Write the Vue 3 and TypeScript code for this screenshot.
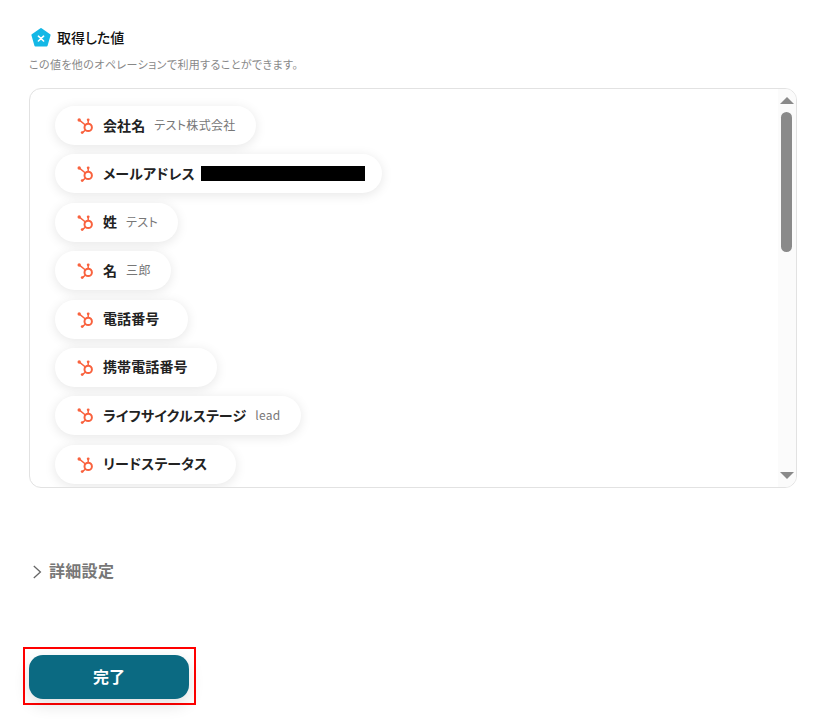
<script setup lang="ts">
interface Item { label: string; value?: string; redacted?: boolean }
const items: Item[] = [
  { label: '会社名', value: 'テスト株式会社' },
  { label: 'メールアドレス', redacted: true },
  { label: '姓', value: 'テスト' },
  { label: '名', value: '三郎' },
  { label: '電話番号' },
  { label: '携帯電話番号' },
  { label: 'ライフサイクルステージ', value: 'lead' },
  { label: 'リードステータス' },
]
</script>

<template>
  <main class="page">
    <header class="head">
      <svg class="pent" viewBox="0 0 20 20" width="20" height="20" aria-hidden="true">
        <path d="M10 2 18.6 8 15.6 18.4H4.4L1.4 8Z" fill="#14b8e6" stroke="#14b8e6" stroke-width="2" stroke-linejoin="round"/>
        <path d="M7.4 9.2 12.6 14M12.6 9.2 7.4 14" stroke="#fff" stroke-width="1.6" stroke-linecap="round"/>
      </svg>
      <h2>取得した値</h2>
    </header>
    <p class="desc">この値を他のオペレーションで利用することができます。</p>

    <section class="box">
      <ul class="list">
        <li v-for="item in items" :key="item.label" class="pill">
          <svg class="hs" viewBox="0 0 16 19" width="16" height="19" aria-hidden="true">
            <g fill="none" stroke="#f9623e">
              <circle cx="11.2" cy="11.4" r="3.7" stroke-width="2"/>
              <path d="M11.2 7.4V4M8.4 9 2.4 4.2M8.6 14 5.4 16.6" stroke-width="1.5"/>
            </g>
            <g fill="#f9623e">
              <circle cx="11.2" cy="3.8" r="1.4"/>
              <circle cx="2.2" cy="4" r="1.7"/>
              <circle cx="5.2" cy="16.6" r="1.4"/>
            </g>
          </svg>
          <span class="label">{{ item.label }}</span>
          <span v-if="item.redacted" class="redact"></span>
          <span v-else class="value">{{ item.value }}</span>
        </li>
      </ul>
      <div class="scroll">
        <span class="arrow up"></span>
        <span class="track"><span class="thumb"></span></span>
        <span class="arrow down"></span>
      </div>
    </section>

    <div class="detail">
      <svg viewBox="0 0 10 16" width="10" height="16" aria-hidden="true">
        <path d="M1.8 2 8.4 8 1.8 14" fill="none" stroke="#666" stroke-width="1.3"/>
      </svg>
      <span>詳細設定</span>
    </div>

    <div class="action">
      <button class="done" type="button">完了</button>
    </div>
  </main>
</template>

<style>
html, body { background: #fff; }
</style>

<style scoped>
.page {
  width: 823px;
  height: 724px;
  box-sizing: border-box;
  padding: 27px 26px 0 29px;
  overflow: hidden;
  font-family: "Noto Sans CJK JP", "Noto Sans", sans-serif;
  font-feature-settings: "palt";
  background: #fff;
}
.head {
  display: flex;
  align-items: center;
  gap: 6px;
  padding-left: 2px;
  height: 20px;
}
.pent { flex: none; }
h2 {
  margin: 0;
  font-size: 14px;
  line-height: 20px;
  font-weight: 500;
  color: #111;
}
.desc {
  margin: 9px 0 0;
  font-size: 11px;
  line-height: 16px;
  letter-spacing: 0.4px;
  color: #888;
}
.box {
  display: flex;
  margin-top: 16px;
  height: 400px;
  box-sizing: border-box;
  border: 1px solid #e2e2e2;
  border-radius: 12px;
  overflow: hidden;
}
.list {
  flex: 1;
  min-width: 0;
  margin: 0;
  padding: 17px 0 0 25px;
  list-style: none;
  display: flex;
  flex-direction: column;
  align-items: flex-start;
  gap: 9.4px;
  overflow: hidden;
}
.pill {
  flex: none;
  display: flex;
  align-items: center;
  height: 39px;
  box-sizing: border-box;
  padding: 0 20px 0 22px;
  border-radius: 20px;
  background: #fff;
  box-shadow: 0 2px 12px rgba(0, 0, 0, 0.1);
}
.hs { flex: none; margin-right: 10px; }
.label {
  padding-bottom: 2px;
  font-size: 14px;
  font-weight: 700;
  color: #222;
  letter-spacing: 0.1px;
  white-space: nowrap;
}
.value {
  margin-left: 9px;
  padding-bottom: 2px;
  font-size: 12px;
  letter-spacing: 0.35px;
  color: #777;
  white-space: nowrap;
}
.redact {
  margin-left: 6px;
  margin-right: -3px;
  width: 164px;
  height: 15px;
  background: #000;
}
.scroll {
  flex: none;
  width: 18px;
  display: flex;
  flex-direction: column;
  align-items: center;
  background: #fbfbfb;
}
.arrow {
  flex: none;
  width: 0;
  height: 0;
  border-left: 7px solid transparent;
  border-right: 7px solid transparent;
}
.up { margin-top: 8px; border-bottom: 7px solid #8a8a8a; }
.down { margin-bottom: 8px; border-top: 7px solid #8a8a8a; }
.track {
  flex: 1;
  align-self: stretch;
  padding: 8px 4px 0 3px;
}
.thumb {
  display: block;
  height: 140px;
  border-radius: 6px;
  background: #8a8a8a;
}
.detail {
  display: flex;
  align-items: center;
  gap: 7px;
  margin-top: 72px;
  padding-left: 3px;
  height: 24px;
}
.detail span {
  padding-bottom: 4px;
  font-size: 16px;
  font-weight: 700;
  letter-spacing: 0.3px;
  color: #777;
}
.action {
  margin: 63px 0 0 -6px;
  width: 173px;
  height: 58px;
  box-sizing: border-box;
  border: 2px solid #f00;
  padding: 6px 4px;
}
.done {
  display: block;
  width: 160px;
  height: 44px;
  padding: 0 0 2px;
  border: 0;
  border-radius: 14px;
  background: #0b6a82;
  color: #fff;
  font: inherit;
  font-feature-settings: "palt";
  font-size: 16px;
  font-weight: 700;
  box-shadow: 0 6px 16px rgba(0, 0, 0, 0.12);
}
</style>
